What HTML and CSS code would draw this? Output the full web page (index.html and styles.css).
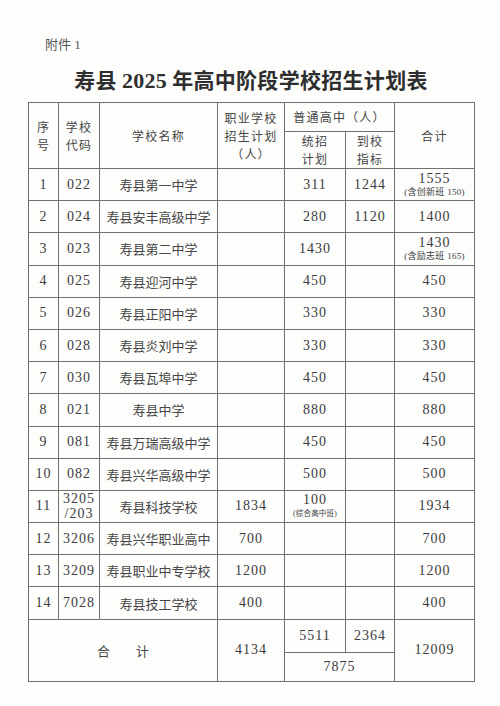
FILE: index.html
```html
<!DOCTYPE html>
<html lang="zh">
<head>
<meta charset="utf-8">
<link rel="stylesheet" href="styles.css">
</head>
<body>
<div class="page">
  <div class="annex">附件 1</div>
  <h1 class="title">寿县 <span class="num">2025</span> 年高中阶段学校招生计划表</h1>
  <table class="plan">
    <colgroup>
      <col class="c-no"><col class="c-code"><col class="c-name"><col class="c-voc"><col class="c-tz"><col class="c-dx"><col class="c-sum">
    </colgroup>
    <thead>
      <tr class="h1">
        <th rowspan="2" class="hl">序<br>号</th>
        <th rowspan="2" class="hl">学校<br>代码</th>
        <th rowspan="2">学校名称</th>
        <th rowspan="2" class="hl3">职业学校<br>招生计划<br>（人）</th>
        <th colspan="2">普通高中（人）</th>
        <th rowspan="2">合计</th>
      </tr>
      <tr class="h2">
        <th class="hl">统招<br>计划</th>
        <th class="hl">到校<br>指标</th>
      </tr>
    </thead>
    <tbody>
      <tr><td>1</td><td>022</td><td class="name">寿县第一中学</td><td></td><td>311</td><td>1244</td><td class="stack">1555<span class="note">(含创新班 150)</span></td></tr>
      <tr><td>2</td><td>024</td><td class="name">寿县安丰高级中学</td><td></td><td>280</td><td>1120</td><td>1400</td></tr>
      <tr><td>3</td><td>023</td><td class="name">寿县第二中学</td><td></td><td>1430</td><td></td><td class="stack">1430<span class="note">(含励志班 165)</span></td></tr>
      <tr><td>4</td><td>025</td><td class="name">寿县迎河中学</td><td></td><td>450</td><td></td><td>450</td></tr>
      <tr><td>5</td><td>026</td><td class="name">寿县正阳中学</td><td></td><td>330</td><td></td><td>330</td></tr>
      <tr><td>6</td><td>028</td><td class="name">寿县炎刘中学</td><td></td><td>330</td><td></td><td>330</td></tr>
      <tr><td>7</td><td>030</td><td class="name">寿县瓦埠中学</td><td></td><td>450</td><td></td><td>450</td></tr>
      <tr><td>8</td><td>021</td><td class="name">寿县中学</td><td></td><td>880</td><td></td><td>880</td></tr>
      <tr><td>9</td><td>081</td><td class="name">寿县万瑞高级中学</td><td></td><td>450</td><td></td><td>450</td></tr>
      <tr><td>10</td><td>082</td><td class="name">寿县兴华高级中学</td><td></td><td>500</td><td></td><td>500</td></tr>
      <tr><td>11</td><td class="code2">3205<br>/203</td><td class="name">寿县科技学校</td><td>1834</td><td class="stack">100<span class="note small">(综合高中班)</span></td><td></td><td>1934</td></tr>
      <tr><td>12</td><td>3206</td><td class="name">寿县兴华职业高中</td><td>700</td><td></td><td></td><td>700</td></tr>
      <tr><td>13</td><td>3209</td><td class="name">寿县职业中专学校</td><td>1200</td><td></td><td></td><td>1200</td></tr>
      <tr><td>14</td><td>7028</td><td class="name">寿县技工学校</td><td>400</td><td></td><td></td><td>400</td></tr>
      <tr class="t1">
        <td colspan="3" rowspan="2" class="name total">合　　计</td>
        <td rowspan="2">4134</td>
        <td>5511</td><td>2364</td>
        <td rowspan="2">12009</td>
      </tr>
      <tr class="t2"><td colspan="2">7875</td></tr>
    </tbody>
  </table>
</div>
</body>
</html>
```
FILE: styles.css
```css
html, body {
  margin: 0;
  padding: 0;
  background: #fdfdfc;
}
.page {
  width: 500px;
  height: 706px;
  padding: 36px 0 0 28px;
  box-sizing: border-box;
  color: #3a3a3a;
  font-family: "Liberation Serif", "Noto Sans CJK SC", serif;
}
.annex {
  margin-left: 17px;
  font-size: 13px;
  line-height: 18px;
  color: #555;
  font-family: "Liberation Serif", "Noto Sans CJK SC", serif;
}
.title {
  margin: 12px 0 0 0;
  width: 446px;
  text-align: center;
  font-size: 21px;
  line-height: 26px;
  font-weight: bold;
  color: #2e2e2e;
  font-family: "Noto Sans CJK SC", sans-serif;
  letter-spacing: 0.3px;
}
.title .num {
  font-family: "Liberation Serif", serif;
  font-weight: bold;
  font-size: 22px;
}
.plan {
  margin-top: 8px;
  border-collapse: collapse;
  table-layout: fixed;
  width: 446px;
  border: 1.5px solid #666;
}
.c-no { width: 30px; }
.c-code { width: 41px; }
.c-name { width: 118px; }
.c-voc { width: 67px; }
.c-tz { width: 61px; }
.c-dx { width: 49px; }
.c-sum { width: 80px; }
.plan th, .plan td {
  border: 1px solid #707070;
  padding: 0;
  text-align: center;
  vertical-align: middle;
  overflow: hidden;
  white-space: nowrap;
}
.plan th {
  font-weight: normal;
  font-family: "Noto Sans CJK SC", sans-serif;
  font-size: 12px;
  line-height: 18px;
  color: #454545;
  letter-spacing: 1.2px;
}
.plan tr.h1 { height: 29px; }
.plan tr.h2 { height: 36px; }
.plan td {
  font-family: "Liberation Serif", serif;
  font-size: 14px;
  letter-spacing: 1px;
  color: #3c3c3c;
}
.plan tbody tr { height: 32.2px; }
.plan td.name {
  font-family: "Noto Sans CJK SC", sans-serif;
  font-size: 13px;
  letter-spacing: 0;
  color: #474747;
}
.plan td.total { letter-spacing: 0; }
.plan td.code2 { line-height: 15px; }
.plan td.stack { line-height: 15px; }
.note {
  display: block;
  font-family: "Liberation Serif", "Noto Sans CJK SC", serif;
  font-size: 9px;
  line-height: 13px;
  letter-spacing: 0.3px;
}
.note.small {
  font-size: 7.5px;
  letter-spacing: 0.2px;
}
.plan tr.t1 { height: 33px; }
.plan tr.t2 { height: 29px; }
```
